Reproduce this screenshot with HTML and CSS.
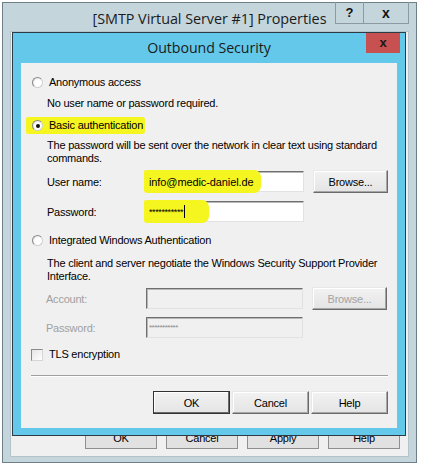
FILE: index.html
```html
<!DOCTYPE html>
<html>
<head>
<meta charset="utf-8">
<link rel="stylesheet" href="styles.css">
</head>
<body>
<div class="win">
  <div class="win-title">
    <span></span>
    <span class="win-title-text">[SMTP Virtual Server #1] Properties</span>
    <div class="win-ctrls"><span class="ctrl ctrl-help">?</span><span class="ctrl ctrl-close">x</span></div>
  </div>
  <div class="win-client">
    <div class="win-buttons">
      <span class="wbtn">OK</span><span class="wbtn">Cancel</span><span class="wbtn">Apply</span><span class="wbtn">Help</span>
    </div>
  </div>

  <div class="dlg">
    <div class="dlg-title">
      <span class="dlg-title-text">Outbound Security</span>
      <span class="dlg-close">x</span>
    </div>
    <div class="dlg-client">
      <div class="opt opt-anon"><span class="radio"></span><span>Anonymous access</span></div>
      <p class="desc desc-anon">No user name or password required.</p>

      <div class="opt opt-basic"><span class="hl"><span class="radio on"></span><span>Basic authentication</span></span></div>
      <p class="desc desc-basic">The password will be sent over the network in clear text using standard<br>commands.</p>

      <div class="field field-user">
        <span class="label">User name:</span>
        <span class="input"><span class="mark mark-user">info@medic-daniel.de</span></span>
        <span class="btn">Browse...</span>
      </div>
      <div class="field field-pass">
        <span class="label">Password:</span>
        <span class="input"><span class="mark mark-pass"><span class="stars">***********</span><span class="caret"></span></span></span>
      </div>

      <div class="opt opt-int"><span class="radio"></span><span>Integrated Windows Authentication</span></div>
      <p class="desc desc-int">The client and server negotiate the Windows Security Support Provider<br>Interface.</p>

      <div class="field field-acct disabled">
        <span class="label">Account:</span>
        <span class="input input-dis"></span>
        <span class="btn btn-dis">Browse...</span>
      </div>
      <div class="field field-pass2 disabled">
        <span class="label">Password:</span>
        <span class="input input-dis"><span class="stars stars-dis">***********</span></span>
      </div>

      <div class="opt opt-tls"><span class="check"></span><span>TLS encryption</span></div>

      <div class="sep"></div>

      <div class="dlg-buttons">
        <span class="btn btn-default">OK</span>
        <span class="btn">Cancel</span>
        <span class="btn">Help</span>
      </div>
    </div>
  </div>
</div>
</body>
</html>
```
FILE: styles.css
```css
* { box-sizing: border-box; }
html, body { margin: 0; padding: 0; background: #ffffff; }
body {
  font-family: "Liberation Sans", Arial, sans-serif;
  font-size: 11px;
  letter-spacing: -0.22px;
  color: #000;
  width: 423px;
  height: 469px;
  overflow: hidden;
}
p { margin: 0; }

/* Outer window */
.win {
  position: relative;
  margin: 2px 0 0 2px;
  width: 415px;
  height: 461px;
  border: 1px solid #6f7f88;
  background: #c5d5dc;
  display: flex;
  flex-direction: column;
}
.win-title {
  height: 28px;
  display: grid;
  grid-template-columns: 1fr auto 1fr;
  align-items: start;
}
.win-title-text {
  font-family: "Open Sans", "Noto Sans", sans-serif;
  font-size: 14.4px;
  letter-spacing: -0.05px;
  color: #1b1b1b;
  line-height: 18px;
  padding-top: 7px;
  white-space: nowrap;
}
.win-ctrls {
  justify-self: end;
  display: flex;
  margin-right: 7px;
  margin-top: -1px;
}
.ctrl {
  height: 22px;
  border: 1px solid #8c9aa2;
  border-top: none;
  font-family: "Liberation Sans", Arial, sans-serif;
  font-weight: bold;
  letter-spacing: 0;
  color: #111;
  display: flex;
  align-items: center;
  justify-content: center;
}
.ctrl-help { width: 28px; font-size: 13px; border-right: none; }
.ctrl-close { width: 46px; font-size: 14px; }

.win-client {
  flex: 1;
  margin: 0 7px 5px 7px;
  background: #f0f0f0;
  border: 1px solid #b4c3ca;
  display: flex;
  flex-direction: column;
  justify-content: flex-end;
}
.win-buttons {
  display: flex;
  justify-content: flex-end;
  gap: 9px;
  padding: 0 8px 7px 0;
}
.wbtn {
  width: 72px;
  height: 23px;
  background: #e1e1e1;
  border: 1px solid #8f8f8f;
  display: flex;
  align-items: center;
  justify-content: center;
  font-size: 11px;
}

/* Inner dialog (overlapping window) */
.dlg {
  position: absolute;
  left: 9px;
  top: 29px;
  width: 394px;
  height: 404px;
  border: 1px solid #2c3b45;
  background: #63c8ea;
  padding: 0 8px 7px 8px;
  display: flex;
  flex-direction: column;
}
.dlg-title {
  height: 30px;
  display: flex;
  justify-content: center;
  align-items: flex-start;
  position: relative;
}
.dlg-title-text {
  font-family: "Open Sans", "Noto Sans", sans-serif;
  font-size: 14.2px;
  letter-spacing: -0.05px;
  color: #1b1b1b;
  line-height: 18px;
  padding-top: 6px;
}
.dlg-close {
  position: absolute;
  top: 0;
  right: -3px;
  width: 34px;
  height: 20px;
  background: #c75050;
  color: #1a1a1a;
  font-weight: bold;
  font-size: 13px;
  letter-spacing: 0;
  display: flex;
  align-items: center;
  justify-content: center;
  line-height: 1;
  padding-bottom: 2px;
}
.dlg-client {
  flex: 1;
  background: #f0f0f0;
  padding: 13px 9px 0 11px;
  display: flex;
  flex-direction: column;
}

/* Options */
.opt {
  display: flex;
  align-items: center;
  height: 13px;
  line-height: 13px;
  gap: 6px;
  white-space: nowrap;
}
.opt-basic { margin-top: 9px; }
.opt-int { margin-top: 11px; }
.opt-tls { margin-top: 9px; gap: 6px; margin-left: -1px; }
.hl {
  display: inline-flex;
  align-items: center;
  gap: 6px;
  background: #f5f51f;
  margin: -2px 0 -2px -6px;
  padding: 2px 2px 2px 6px;
  border-radius: 2px 3px 3px 2px;
}
.radio {
  width: 11px;
  height: 11px;
  border-radius: 50%;
  border: 1px solid #8a8a8a;
  border-right-color: #d0d0d0;
  border-bottom-color: #d0d0d0;
  background: radial-gradient(circle at 60% 60%, #ffffff 0 45%, #e2e2e2 80%);
  position: relative;
  flex: none;
}
.radio.on::after {
  content: "";
  position: absolute;
  left: 3px;
  top: 3px;
  width: 4px;
  height: 4px;
  border-radius: 50%;
  background: #111;
}
.check {
  width: 12px;
  height: 12px;
  border: 1px solid #8a8a8a;
  border-right-color: #d6d6d6;
  border-bottom-color: #d6d6d6;
  background: linear-gradient(135deg, #e4e4e4, #ffffff);
  flex: none;
}

.desc {
  margin-left: 15px;
  line-height: 13px;
  white-space: nowrap;
}
.desc-anon { margin-top: 8px; }
.desc-basic { margin-top: 7px; }
.desc-int { margin-top: 10px; }

/* Fields */
.field {
  display: flex;
  align-items: center;
  height: 23px;
  margin-left: 15px;
}
.field-user { margin-top: 5px; }
.field-pass { margin-top: 7px; }
.field-acct { margin-top: 4px; }
.field-pass2 { margin-top: 6px; }
.label {
  width: 99px;
  flex: none;
}
.disabled .label { color: #a0a0a0; width: 100px; margin-left: -1px; }
.input {
  width: 158px;
  height: 21px;
  flex: none;
  background: #ffffff;
  border-top: 1px solid #6f6f6f;
  border-left: 1px solid #6f6f6f;
  border-right: 1px solid #e2e2e2;
  border-bottom: 1px solid #e2e2e2;
  box-shadow: inset 1px 1px 0 #b8b8b8;
  display: flex;
  align-items: center;
}
.input-dis {
  width: 157px;
  background: #f0f0f0;
}
.mark {
  align-self: stretch;
  display: flex;
  align-items: center;
  background: #f5f51f;
  margin: -2px 0 -2px -3px;
  border-radius: 2px 7px 7px 3px;
}
.mark-user { width: 117px; padding-left: 5px; letter-spacing: -0.1px; }
.mark-pass { width: 65px; padding-left: 5px; }
.stars {
  font-size: 9px;
  letter-spacing: -0.4px;
  line-height: 1;
  padding-top: 1px;
}
.stars-dis { color: #8a8a8a; margin-left: 2px; font-size: 8px; letter-spacing: -0.5px; }
.caret {
  width: 1px;
  height: 13px;
  background: #000;
  margin-left: 1px;
}

.btn {
  width: 75px;
  height: 23px;
  flex: none;
  background: linear-gradient(#f2f2f2, #e4e4e4);
  border: 1px solid;
  border-color: #e8e8e8 #6a6a6a #6a6a6a #e8e8e8;
  box-shadow: inset -1px -1px 0 #a6a6a6, inset 1px 1px 0 #ffffff;
  display: flex;
  align-items: center;
  justify-content: center;
}
.field .btn { margin-left: 9px; }
.btn-dis { color: #a3a3a3; }

.sep {
  margin-top: 14px;
  height: 2px;
  border-top: 1px solid #a0a0a0;
  border-bottom: 1px solid #ffffff;
  margin-left: -1px;
}
.dlg-buttons {
  margin-top: 14px;
  display: flex;
  justify-content: flex-end;
  gap: 2px;
}
.dlg-buttons .btn { width: 77px; }
.btn-default {
  border-color: #333 #333 #333 #333;
  box-shadow: inset -1px -1px 0 #6a6a6a, inset 1px 1px 0 #ffffff;
}
```
